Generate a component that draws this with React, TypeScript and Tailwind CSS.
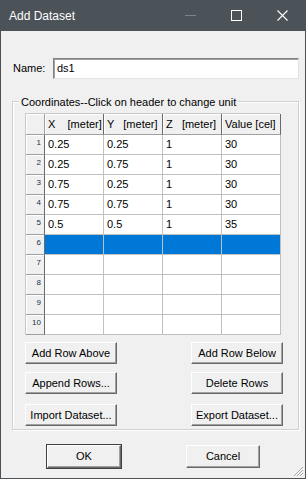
import React from "react";

const rows: string[][] = [
  ["0.25", "0.25", "1", "30"],
  ["0.25", "0.75", "1", "30"],
  ["0.75", "0.25", "1", "30"],
  ["0.75", "0.75", "1", "30"],
  ["0.5", "0.5", "1", "35"],
  ["", "", "", ""],
  ["", "", "", ""],
  ["", "", "", ""],
  ["", "", "", ""],
  ["", "", "", ""],
];

const headers = ["X    [meter]", "Y   [meter]", "Z   [meter]", "Value [cel]"];

function Btn({ label, w, def }: { label: string; w: string; def?: boolean }) {
  return (
    <div
      className={
        "box-border flex items-center justify-center bg-[#f0f0f0] text-[11px] text-black border-t border-l border-t-white border-l-white border-b border-r border-b-[#696969] border-r-[#696969] shadow-[inset_-1px_-1px_0_#a0a0a0] " +
        w
      }
      style={def ? { outline: "1px solid #404040" } : undefined}
    >
      {label}
    </div>
  );
}

export default function App() {
  return (
    <div
      className="w-[306px] h-[479px] box-border bg-[#f0f0f0] border-x border-b border-[#4b5358] flex flex-col overflow-hidden"
      style={{ fontFamily: '"Liberation Sans", Arial, sans-serif' }}
    >
      {/* Title bar */}
      <div className="h-[31px] shrink-0 bg-[#4b5358] flex items-center relative">
        <span className="ml-[8px] text-white text-[12px]">Add Dataset</span>
        <div className="absolute left-[184px] top-[15px] w-[11px] h-px bg-[#7a8388]" />
        <div className="absolute left-[230px] top-[10px] w-[11px] h-[11px] border border-white box-border" />
        <svg className="absolute left-[276px] top-[10px]" width="11" height="11" viewBox="0 0 11 11">
          <path d="M0.5 0.5 L10.5 10.5 M10.5 0.5 L0.5 10.5" stroke="white" strokeWidth="1.1" />
        </svg>
      </div>

      <div className="flex flex-col pl-[11px] pr-[6px]">
        {/* Name row */}
        <div className="mt-[27px] h-[21px] flex items-center">
          <span className="ml-[1px] w-[40px] text-[11px] text-black">Name:</span>
          <div className="flex-1 h-[21px] box-border bg-white border-t border-l border-[#828282] border-b border-r border-b-[#e3e3e3] border-r-[#e3e3e3] shadow-[inset_1px_1px_0_#a0a0a0] flex items-center pl-[3px] text-[11px] text-black">
            ds1
          </div>
        </div>

        {/* Group box */}
        <div className="mt-[22px] h-[329px] box-border relative border border-[#d0d0d0] shadow-[1px_1px_0_#ffffff,inset_1px_1px_0_#ffffff] pl-[12px] pt-[11px]">
          <span className="absolute left-[6px] -top-[8px] bg-[#f0f0f0] px-[2px] text-[11px] text-black">
            Coordinates--Click on header to change unit
          </span>

          {/* Grid */}
          <div className="grid grid-cols-[19px_59px_59px_59px_59px] w-[255px] box-border border-t border-l border-[#c8c8c8]">
            <div className="h-[21px] box-border bg-[#f0f0f0] border-r border-b border-r-[#a0a0a0] border-b-[#a0a0a0] shadow-[inset_1px_1px_0_#ffffff]" />
            {headers.map((h, i) => (
              <div
                key={i}
                className="h-[21px] box-border bg-[#f0f0f0] border-r border-b border-r-[#696969] border-b-[#a0a0a0] shadow-[inset_1px_1px_0_#ffffff] flex items-center pl-[3px] text-[11px] text-black whitespace-pre overflow-hidden"
              >
                {h}
              </div>
            ))}
            {rows.map((r, ri) => (
              <React.Fragment key={ri}>
                <div className="h-[20px] box-border bg-[#f0f0f0] border-r border-b border-r-[#696969] border-b-[#a0a0a0] shadow-[inset_1px_1px_0_#ffffff] flex justify-end items-start pr-[3px] pt-[3px] text-[8px] leading-[9px] text-[#20304a]">
                  {ri + 1}
                </div>
                {r.map((c, ci) => (
                  <div
                    key={ci}
                    className={
                      "h-[20px] box-border border-r border-b border-[#c0c0c0] flex items-center pl-[3px] text-[11px] text-black " +
                      (ri === 5 ? "bg-[#0078d7]" : "bg-white")
                    }
                  >
                    {c}
                  </div>
                ))}
              </React.Fragment>
            ))}
          </div>

          {/* Buttons */}
          <div className="mt-[7px] w-[258px] flex justify-between">
            <Btn label="Add Row Above" w="w-[92px] h-[22px]" />
            <Btn label="Add Row Below" w="w-[92px] h-[22px]" />
          </div>
          <div className="mt-[8px] w-[258px] flex justify-between">
            <Btn label="Append Rows..." w="w-[92px] h-[22px]" />
            <Btn label="Delete Rows" w="w-[92px] h-[22px]" />
          </div>
          <div className="mt-[10px] w-[258px] flex justify-between">
            <Btn label="Import Dataset..." w="w-[92px] h-[22px]" />
            <Btn label="Export Dataset..." w="w-[92px] h-[22px]" />
          </div>
        </div>

        {/* OK / Cancel */}
        <div className="mt-[15px] flex">
          <div className="ml-[35px]">
            <Btn label="OK" w="w-[74px] h-[23px]" def />
          </div>
          <div className="ml-[65px]">
            <Btn label="Cancel" w="w-[74px] h-[23px]" />
          </div>
        </div>
      </div>

      <div className="flex-1 relative">
        <svg className="absolute right-[1px] bottom-[1px]" width="12" height="12" viewBox="0 0 12 12">
          <path d="M11 2 L2 11 M11 5 L5 11 M11 8 L8 11" stroke="#a0a0a0" strokeWidth="1" />
          <path d="M11 3 L3 11 M11 6 L6 11 M11 9 L9 11" stroke="#ffffff" strokeWidth="1" />
        </svg>
      </div>
    </div>
  );
}
